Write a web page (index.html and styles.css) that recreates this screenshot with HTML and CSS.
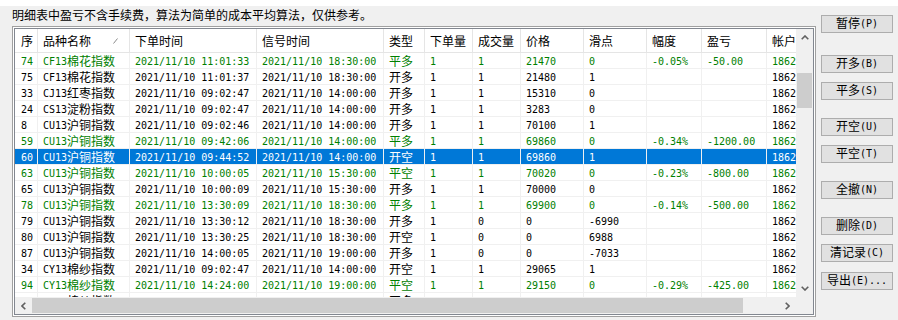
FILE: index.html
```html
<!DOCTYPE html>
<html lang="zh-CN">

<head>
    <meta charset="UTF-8">
    <meta name="viewport" content="width=device-width, initial-scale=1.0">
    <title>成交明细</title>
    <link rel="stylesheet" href="styles.css">
</head>

<body>
    <div class="window">
        <div class="main">
            <p class="note"><span class="zh">明细表中盈亏不含手续费，算法为简单的成本平均算法，仅供参考。</span></p>
            <div class="frame">
                <div class="list">
                    <div class="view">
                        <table class="grid">
                            <thead>
                                <tr>
                                    <th class="c-no"><span class="zh">序</span></th>
                                    <th class="c-name"><span class="zh">品种名称</span><svg class="sort" width="5" height="6" viewBox="0 0 5 6"><path d="M0.5 5.5 L4.5 0.5" stroke="#8a8a8a" stroke-width="1" fill="none"/></svg></th>
                                    <th class="c-time"><span class="zh">下单时间</span></th>
                                    <th class="c-time"><span class="zh">信号时间</span></th>
                                    <th class="c-type"><span class="zh">类型</span></th>
                                    <th class="c-qty"><span class="zh">下单量</span></th>
                                    <th class="c-qty"><span class="zh">成交量</span></th>
                                    <th class="c-price"><span class="zh">价格</span></th>
                                    <th class="c-price"><span class="zh">滑点</span></th>
                                    <th class="c-pct"><span class="zh">幅度</span></th>
                                    <th class="c-pnl"><span class="zh">盈亏</span></th>
                                    <th class="c-acct"><span class="zh">帐户</span></th>
                                </tr>
                            </thead>
                            <tbody>
                                <tr class="closed"><td>74</td><td>CF13<span class="zh">棉花指数</span></td><td>2021/11/10 11:01:33</td><td>2021/11/10 18:30:00</td><td><span class="zh">平多</span></td><td>1</td><td>1</td><td>21470</td><td>0</td><td>-0.05%</td><td>-50.00</td><td>1862</td></tr>
                                <tr><td>75</td><td>CF13<span class="zh">棉花指数</span></td><td>2021/11/10 11:01:37</td><td>2021/11/10 18:30:00</td><td><span class="zh">开多</span></td><td>1</td><td>1</td><td>21480</td><td>1</td><td></td><td></td><td>1862</td></tr>
                                <tr><td>33</td><td>CJ13<span class="zh">红枣指数</span></td><td>2021/11/10 09:02:47</td><td>2021/11/10 14:00:00</td><td><span class="zh">开多</span></td><td>1</td><td>1</td><td>15310</td><td>0</td><td></td><td></td><td>1862</td></tr>
                                <tr><td>24</td><td>CS13<span class="zh">淀粉指数</span></td><td>2021/11/10 09:02:47</td><td>2021/11/10 14:00:00</td><td><span class="zh">开多</span></td><td>1</td><td>1</td><td>3283</td><td>0</td><td></td><td></td><td>1862</td></tr>
                                <tr><td>8</td><td>CU13<span class="zh">沪铜指数</span></td><td>2021/11/10 09:02:46</td><td>2021/11/10 14:00:00</td><td><span class="zh">开多</span></td><td>1</td><td>1</td><td>70100</td><td>1</td><td></td><td></td><td>1862</td></tr>
                                <tr class="closed"><td>59</td><td>CU13<span class="zh">沪铜指数</span></td><td>2021/11/10 09:42:06</td><td>2021/11/10 14:00:00</td><td><span class="zh">平多</span></td><td>1</td><td>1</td><td>69860</td><td>0</td><td>-0.34%</td><td>-1200.00</td><td>1862</td></tr>
                                <tr class="sel"><td>60</td><td>CU13<span class="zh">沪铜指数</span></td><td>2021/11/10 09:44:52</td><td>2021/11/10 14:00:00</td><td><span class="zh">开空</span></td><td>1</td><td>1</td><td>69860</td><td>1</td><td></td><td></td><td>1862</td></tr>
                                <tr class="closed"><td>63</td><td>CU13<span class="zh">沪铜指数</span></td><td>2021/11/10 10:00:05</td><td>2021/11/10 15:30:00</td><td><span class="zh">平空</span></td><td>1</td><td>1</td><td>70020</td><td>0</td><td>-0.23%</td><td>-800.00</td><td>1862</td></tr>
                                <tr><td>65</td><td>CU13<span class="zh">沪铜指数</span></td><td>2021/11/10 10:00:09</td><td>2021/11/10 15:30:00</td><td><span class="zh">开多</span></td><td>1</td><td>1</td><td>70000</td><td>0</td><td></td><td></td><td>1862</td></tr>
                                <tr class="closed"><td>78</td><td>CU13<span class="zh">沪铜指数</span></td><td>2021/11/10 13:30:09</td><td>2021/11/10 18:30:00</td><td><span class="zh">平多</span></td><td>1</td><td>1</td><td>69900</td><td>0</td><td>-0.14%</td><td>-500.00</td><td>1862</td></tr>
                                <tr><td>79</td><td>CU13<span class="zh">沪铜指数</span></td><td>2021/11/10 13:30:12</td><td>2021/11/10 18:30:00</td><td><span class="zh">开多</span></td><td>1</td><td>0</td><td>0</td><td>-6990</td><td></td><td></td><td>1862</td></tr>
                                <tr><td>80</td><td>CU13<span class="zh">沪铜指数</span></td><td>2021/11/10 13:30:25</td><td>2021/11/10 18:30:00</td><td><span class="zh">开空</span></td><td>1</td><td>0</td><td>0</td><td>6988</td><td></td><td></td><td>1862</td></tr>
                                <tr><td>87</td><td>CU13<span class="zh">沪铜指数</span></td><td>2021/11/10 14:00:05</td><td>2021/11/10 19:00:00</td><td><span class="zh">开多</span></td><td>1</td><td>0</td><td>0</td><td>-7033</td><td></td><td></td><td>1862</td></tr>
                                <tr><td>34</td><td>CY13<span class="zh">棉纱指数</span></td><td>2021/11/10 09:02:47</td><td>2021/11/10 14:00:00</td><td><span class="zh">开空</span></td><td>1</td><td>1</td><td>29065</td><td>1</td><td></td><td></td><td>1862</td></tr>
                                <tr class="closed"><td>94</td><td>CY13<span class="zh">棉纱指数</span></td><td>2021/11/10 14:24:00</td><td>2021/11/10 19:00:00</td><td><span class="zh">平空</span></td><td>1</td><td>1</td><td>29150</td><td>0</td><td>-0.29%</td><td>-425.00</td><td>1862</td></tr>
                                <tr><td>35</td><td>CY13<span class="zh">棉纱指数</span></td><td>2021/11/10 14:24:03</td><td>2021/11/10 19:00:00</td><td><span class="zh">开多</span></td><td>1</td><td>1</td><td>29155</td><td>1</td><td></td><td></td><td>1862</td></tr>
                            </tbody>
                        </table>
                    </div>
                    <div class="vscroll">
                        <div class="arrow"><svg width="8" height="5" viewBox="0 0 8 5"><path d="M0.7 4.3 L4 1 L7.3 4.3" stroke="#606060" stroke-width="1.6" fill="none"/></svg></div>
                        <div class="track"><div class="thumb"></div></div>
                        <div class="arrow"><svg width="8" height="5" viewBox="0 0 8 5"><path d="M0.7 0.7 L4 4 L7.3 0.7" stroke="#606060" stroke-width="1.6" fill="none"/></svg></div>
                    </div>
                    <div class="hscroll">
                        <div class="arrow"><svg width="5" height="8" viewBox="0 0 5 8"><path d="M4.3 0.7 L1 4 L4.3 7.3" stroke="#606060" stroke-width="1.6" fill="none"/></svg></div>
                        <div class="track"><div class="thumb"></div></div>
                        <div class="arrow"><svg width="5" height="8" viewBox="0 0 5 8"><path d="M0.7 0.7 L4 4 L0.7 7.3" stroke="#606060" stroke-width="1.6" fill="none"/></svg></div>
                    </div>
                    <div class="corner"></div>
                </div>
            </div>
        </div>

        <div class="buttons">
            <button type="button" class="btn"><span class="zh">暂停</span>(P)</button>
            <button type="button" class="btn lead"><span class="zh">开多</span>(B)</button>
            <button type="button" class="btn"><span class="zh">平多</span>(S)</button>
            <button type="button" class="btn sep"><span class="zh">开空</span>(U)</button>
            <button type="button" class="btn"><span class="zh">平空</span>(T)</button>
            <button type="button" class="btn sep"><span class="zh">全撤</span>(N)</button>
            <button type="button" class="btn sep"><span class="zh">删除</span>(D)</button>
            <button type="button" class="btn"><span class="zh">清记录</span>(C)</button>
            <button type="button" class="btn last"><span class="zh">导出</span>(E)...</button>
        </div>
    </div>
</body>

</html>
```

FILE: styles.css
```css
* {
    box-sizing: border-box;
}

body {
    margin: 0;
    height: 320px;
    overflow: hidden;
    background-color: #f0f0f0;
    color: #000;
    font-family: "DejaVu Sans Mono", "Noto Sans CJK SC", monospace;
    font-size: 10px;
}

/* CJK glyphs are full width, latin ones half width */
.zh {
    font-family: "Noto Sans CJK SC", sans-serif;
    font-size: 12px;
    line-height: 11px;
    vertical-align: -1px;
}

.window {
    display: flex;
    height: 320px;
    border-top: 6px solid #fff;
}

.main {
    width: 816px;
    padding-left: 12px;
}

.note {
    margin: 0;
    height: 20px;
    padding-top: 2px;
    line-height: 16px;
}

.frame {
    height: 291px;
    padding: 1px;
    border: 1px solid #a0a0a0;
    background-color: #fff;
}

.list {
    height: 100%;
    display: grid;
    grid-template-columns: 1fr 17px;
    grid-template-rows: 1fr 17px;
    border: 1px solid #828790;
    background-color: #fff;
}

.view {
    overflow: hidden;
}

.grid {
    width: 812px;
    table-layout: fixed;
    border-spacing: 0;
}

.grid th,
.grid td {
    padding: 0 0 0 5px;
    text-align: left;
    white-space: nowrap;
}

.grid th {
    height: 24px;
    font-weight: normal;
    border-right: 1px solid #e5e5e5;
    border-bottom: 1px solid #e5e5e5;
}

.grid td {
    height: 16px;
    padding-top: 2px;
    line-height: 13px;
    border-right: 1px solid #f0f0f0;
    border-bottom: 1px solid #f0f0f0;
}

.grid th:first-child,
.grid td:first-child {
    padding-left: 6px;
}

.c-no { width: 23px; }
.c-name { width: 92px; }
.c-time { width: 127px; }
.c-type { width: 41px; }
.c-qty { width: 48px; }
.c-price { width: 63px; }
.c-pct { width: 55px; }
.c-pnl { width: 65px; }
.c-acct { width: 60px; }

.sort {
    margin-left: 22px;
    vertical-align: 1px;
}

.grid tr.closed td {
    color: #008000;
}

.grid tr.sel td {
    background-color: #0078d7;
    color: #fff;
}

/* scroll bars */
.vscroll,
.hscroll,
.corner {
    background-color: #f0f0f0;
    display: flex;
}

.vscroll {
    flex-direction: column;
}

.arrow {
    width: 17px;
    height: 17px;
    flex: none;
    display: flex;
    align-items: center;
    justify-content: center;
}

.track {
    flex: 1;
    display: flex;
}

.vscroll .thumb {
    width: 15px;
    height: 35px;
    margin: 27px 1px 0;
    background-color: #cdcdcd;
}

.hscroll .thumb {
    width: 711px;
    height: 15px;
    margin: 1px 0;
    background-color: #cdcdcd;
}

/* buttons */
.buttons {
    width: 72px;
    margin-left: 5px;
    padding-top: 9px;
    display: flex;
    flex-direction: column;
}

.btn {
    height: 18px;
    margin-top: 9px;
    padding: 0;
    border: 1px solid #adadad;
    background-color: #e1e1e1;
    color: #000;
    font: inherit;
    line-height: 14px;
    cursor: pointer;
}

.btn:first-child {
    margin-top: 0;
}

.btn.lead {
    margin-top: 22px;
}

.btn.sep {
    margin-top: 18px;
}

.btn.last {
    margin-top: 10px;
}
```
